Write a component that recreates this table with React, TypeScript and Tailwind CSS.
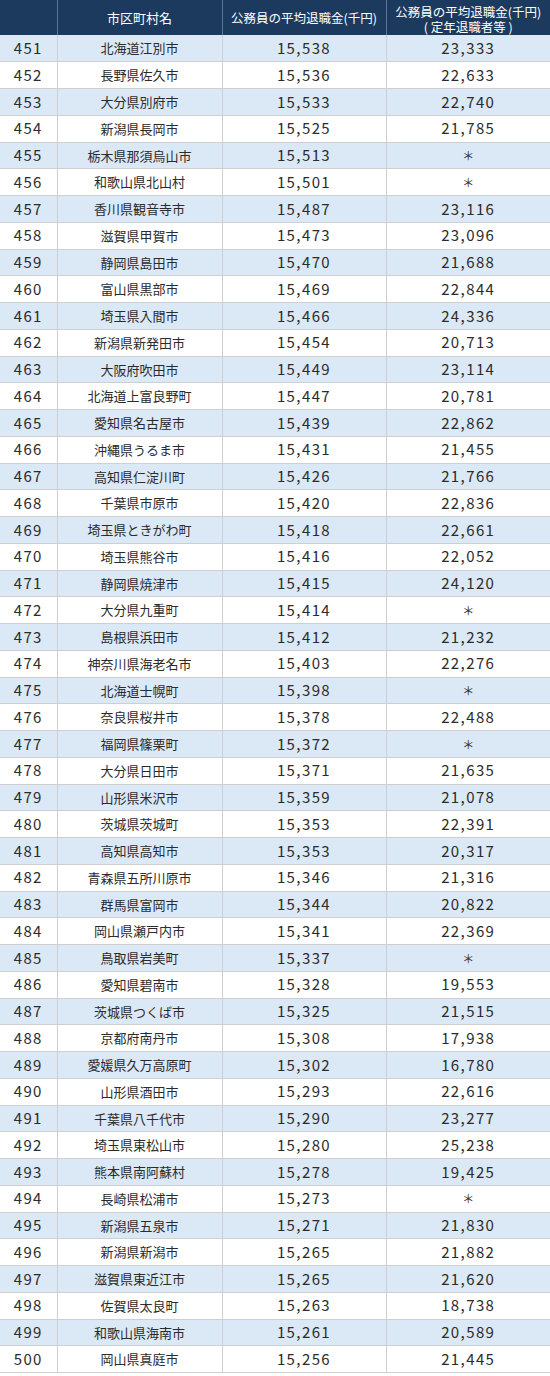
import React from 'react';

type Row = [number, string, string, string];

const ROWS: Row[] = [
  [451, '北海道江別市', '15,538', '23,333'],
  [452, '長野県佐久市', '15,536', '22,633'],
  [453, '大分県別府市', '15,533', '22,740'],
  [454, '新潟県長岡市', '15,525', '21,785'],
  [455, '栃木県那須烏山市', '15,513', '*'],
  [456, '和歌山県北山村', '15,501', '*'],
  [457, '香川県観音寺市', '15,487', '23,116'],
  [458, '滋賀県甲賀市', '15,473', '23,096'],
  [459, '静岡県島田市', '15,470', '21,688'],
  [460, '富山県黒部市', '15,469', '22,844'],
  [461, '埼玉県入間市', '15,466', '24,336'],
  [462, '新潟県新発田市', '15,454', '20,713'],
  [463, '大阪府吹田市', '15,449', '23,114'],
  [464, '北海道上富良野町', '15,447', '20,781'],
  [465, '愛知県名古屋市', '15,439', '22,862'],
  [466, '沖縄県うるま市', '15,431', '21,455'],
  [467, '高知県仁淀川町', '15,426', '21,766'],
  [468, '千葉県市原市', '15,420', '22,836'],
  [469, '埼玉県ときがわ町', '15,418', '22,661'],
  [470, '埼玉県熊谷市', '15,416', '22,052'],
  [471, '静岡県焼津市', '15,415', '24,120'],
  [472, '大分県九重町', '15,414', '*'],
  [473, '島根県浜田市', '15,412', '21,232'],
  [474, '神奈川県海老名市', '15,403', '22,276'],
  [475, '北海道士幌町', '15,398', '*'],
  [476, '奈良県桜井市', '15,378', '22,488'],
  [477, '福岡県篠栗町', '15,372', '*'],
  [478, '大分県日田市', '15,371', '21,635'],
  [479, '山形県米沢市', '15,359', '21,078'],
  [480, '茨城県茨城町', '15,353', '22,391'],
  [481, '高知県高知市', '15,353', '20,317'],
  [482, '青森県五所川原市', '15,346', '21,316'],
  [483, '群馬県富岡市', '15,344', '20,822'],
  [484, '岡山県瀬戸内市', '15,341', '22,369'],
  [485, '鳥取県岩美町', '15,337', '*'],
  [486, '愛知県碧南市', '15,328', '19,553'],
  [487, '茨城県つくば市', '15,325', '21,515'],
  [488, '京都府南丹市', '15,308', '17,938'],
  [489, '愛媛県久万高原町', '15,302', '16,780'],
  [490, '山形県酒田市', '15,293', '22,616'],
  [491, '千葉県八千代市', '15,290', '23,277'],
  [492, '埼玉県東松山市', '15,280', '25,238'],
  [493, '熊本県南阿蘇村', '15,278', '19,425'],
  [494, '長崎県松浦市', '15,273', '*'],
  [495, '新潟県五泉市', '15,271', '21,830'],
  [496, '新潟県新潟市', '15,265', '21,882'],
  [497, '滋賀県東近江市', '15,265', '21,620'],
  [498, '佐賀県太良町', '15,263', '18,738'],
  [499, '和歌山県海南市', '15,261', '20,589'],
  [500, '岡山県真庭市', '15,256', '21,445'],
];

const FONT = "font-['Noto_Sans_CJK_JP','Noto_Sans',sans-serif]";
const NUM = 'text-center text-[15px] tracking-[1.4px]';

export default function App() {
  return (
    <div className={`w-[550px] bg-white ${FONT}`}>
      <table className="w-full table-fixed border-collapse text-[#2b2b2b]">
        <colgroup>
          <col className="w-[57px]" />
          <col className="w-[165px]" />
          <col className="w-[164px]" />
          <col />
        </colgroup>
        <thead>
          <tr className="h-[35px] bg-[#1c3a5e] text-white text-[12.5px] leading-[15px]">
            <th className="font-normal border-r border-[#5a7596]"></th>
            <th className="font-normal text-[13px] border-r border-[#5a7596]">市区町村名</th>
            <th className="font-normal border-r border-[#5a7596] whitespace-nowrap">公務員の平均退職金(千円)</th>
            <th className="font-normal whitespace-nowrap pt-[2px]">
              <div className="flex flex-col items-center">
                <span className="block leading-[15px]">公務員の平均退職金(千円)</span>
                <span className="block leading-[15px]">( 定年退職者等 )</span>
              </div>
            </th>
          </tr>
        </thead>
        <tbody>
          {ROWS.map(([rank, name, avg, retire], i) => (
            <tr
              key={rank}
              className={`h-[26.76px] border-b border-[#cfcfcf] ${i % 2 === 0 ? 'bg-[#dbe8f6]' : 'bg-white'}`}
            >
              <td className={`${NUM} border-r border-[#cfcfcf]`}>{rank}</td>
              <td className="text-center text-[13px] border-r border-[#cfcfcf]">{name}</td>
              <td className={`${NUM} border-r border-[#cfcfcf]`}>{avg}</td>
              <td className={NUM}>
                {retire === '*' ? <span className="text-[12px] tracking-normal">＊</span> : retire}
              </td>
            </tr>
          ))}
        </tbody>
      </table>
    </div>
  );
}
